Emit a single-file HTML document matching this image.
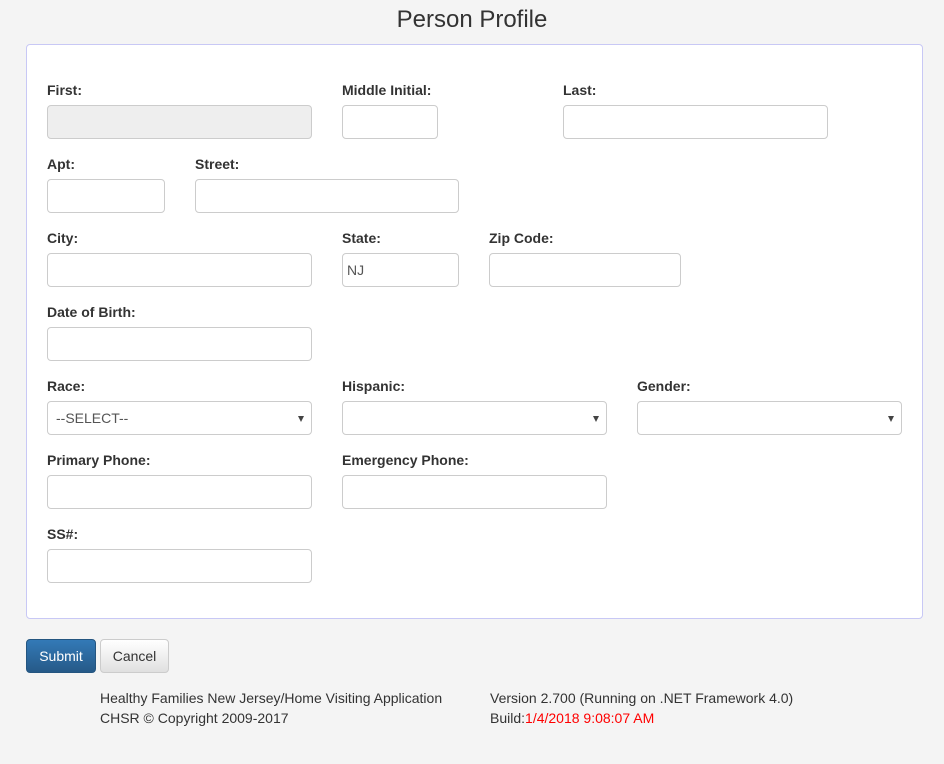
<!DOCTYPE html>
<html><head><meta charset="utf-8"><style>
*{box-sizing:border-box}
body{margin:0;width:944px;height:764px;background:#f4f4f4;font-family:"Liberation Sans",sans-serif;color:#333;position:relative;overflow:hidden}
.t{position:absolute;left:0;width:944px;top:6px;text-align:center;font-size:24px;color:#333}
.p{position:absolute;left:26px;top:44px;width:897px;height:575px;background:#fff;border:1px solid #c8c8f5;border-radius:4px}
.l{position:absolute;font-size:14px;font-weight:bold;color:#333;line-height:16px}
.i{position:absolute;height:34px;border:1px solid #ccc;border-radius:4px;background:#fff;font-size:14px;color:#555;padding:0 4px;line-height:32px}
.d{background:#eee}
.s::after{content:"";position:absolute;right:7px;top:14px;border-left:3.5px solid transparent;border-right:3.5px solid transparent;border-top:6px solid #444}
.b{position:absolute;top:639px;height:34px;border-radius:4px;font-size:14px;line-height:32px;text-align:center}
.f{position:absolute;font-size:14px;line-height:20px;color:#333}
</style></head><body>
<div class="t">Person Profile</div>
<div class="p"></div>
<div class="l" style="left:47px;top:82px">First:</div>
<div class="l" style="left:342px;top:82px">Middle Initial:</div>
<div class="l" style="left:563px;top:82px">Last:</div>
<div class="i d" style="left:47px;top:105px;width:265px"></div>
<div class="i" style="left:342px;top:105px;width:96px"></div>
<div class="i" style="left:563px;top:105px;width:265px"></div>

<div class="l" style="left:47px;top:156px">Apt:</div>
<div class="l" style="left:195px;top:156px">Street:</div>
<div class="i" style="left:47px;top:179px;width:118px"></div>
<div class="i" style="left:195px;top:179px;width:264px"></div>

<div class="l" style="left:47px;top:230px">City:</div>
<div class="l" style="left:342px;top:230px">State:</div>
<div class="l" style="left:489px;top:230px">Zip Code:</div>
<div class="i" style="left:47px;top:253px;width:265px"></div>
<div class="i" style="left:342px;top:253px;width:117px">NJ</div>
<div class="i" style="left:489px;top:253px;width:192px"></div>

<div class="l" style="left:47px;top:304px">Date of Birth:</div>
<div class="i" style="left:47px;top:327px;width:265px"></div>

<div class="l" style="left:47px;top:378px">Race:</div>
<div class="l" style="left:342px;top:378px">Hispanic:</div>
<div class="l" style="left:637px;top:378px">Gender:</div>
<div class="i s" style="left:47px;top:401px;width:265px;padding-left:8px">--SELECT--</div>
<div class="i s" style="left:342px;top:401px;width:265px"></div>
<div class="i s" style="left:637px;top:401px;width:265px"></div>

<div class="l" style="left:47px;top:452px">Primary Phone:</div>
<div class="l" style="left:342px;top:452px">Emergency Phone:</div>
<div class="i" style="left:47px;top:475px;width:265px"></div>
<div class="i" style="left:342px;top:475px;width:265px"></div>

<div class="l" style="left:47px;top:526px">SS#:</div>
<div class="i" style="left:47px;top:549px;width:265px"></div>

<div class="b" style="left:26px;width:70px;background:linear-gradient(#337ab7,#265a88);border:1px solid #245580;color:#fff">Submit</div>
<div class="b" style="left:100px;width:69px;background:linear-gradient(#fff,#e0e0e0);border:1px solid #ccc;color:#333">Cancel</div>

<div class="f" style="left:100px;top:688px">Healthy Families New Jersey/Home Visiting Application<br>CHSR © Copyright 2009-2017</div>
<div class="f" style="left:490px;top:688px">Version 2.700 (Running on .NET Framework 4.0)<br>Build:<span style="color:#f00">1/4/2018 9:08:07 AM</span></div>
</body></html>
